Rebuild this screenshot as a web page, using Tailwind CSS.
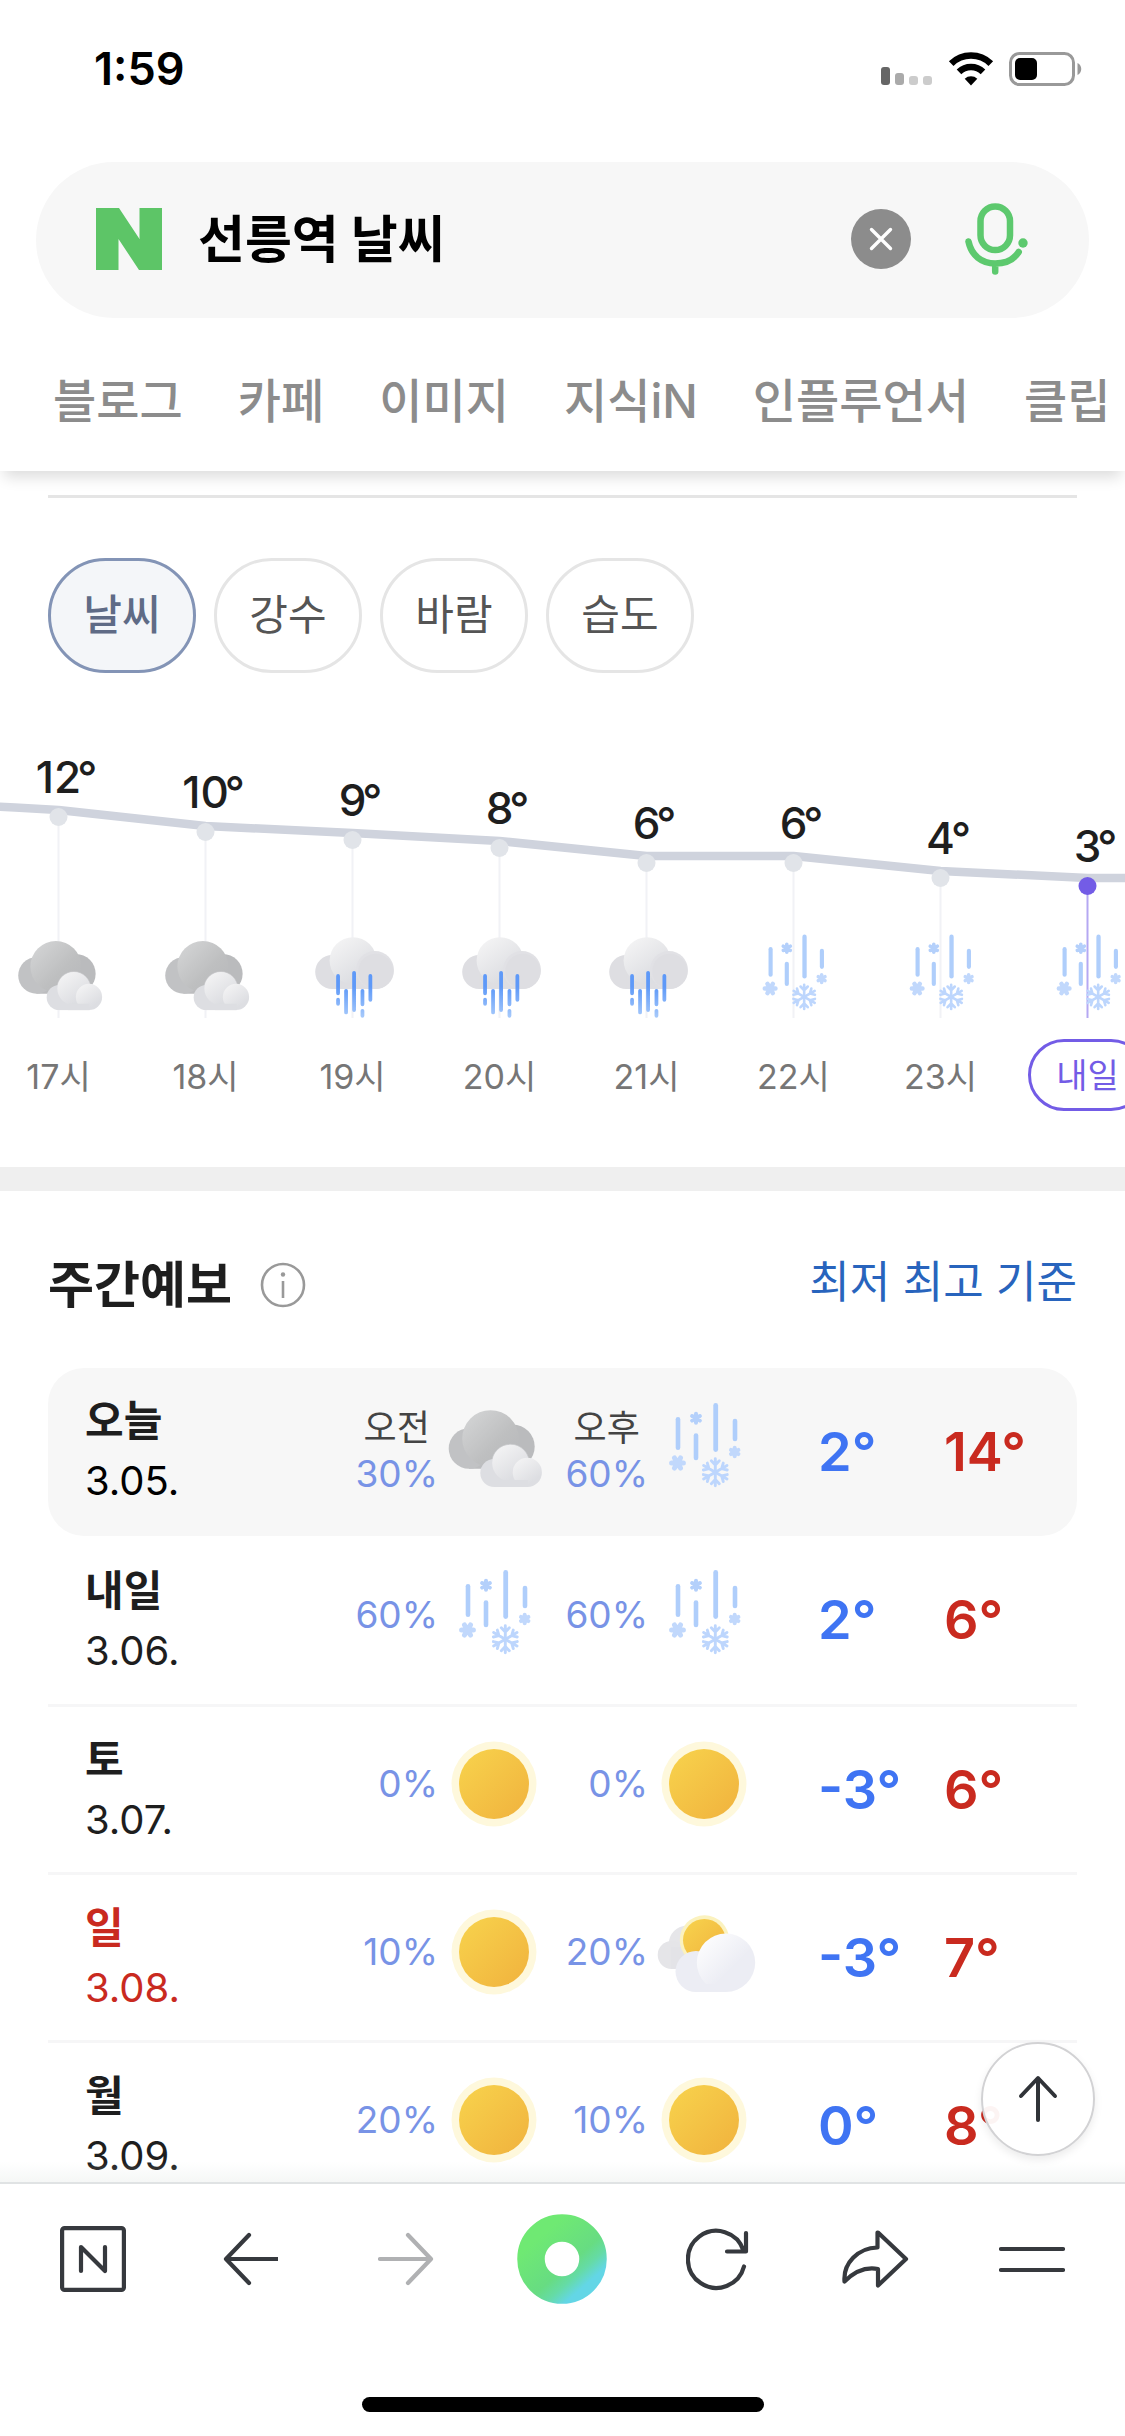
<!DOCTYPE html>
<html lang="ko">
<head>
    <meta charset="UTF-8">
    <meta name="viewport" content="width=device-width, initial-scale=1.0">
    <title>선릉역 날씨</title>
    <script src="https://cdn.jsdelivr.net/npm/@tailwindcss/browser@4"></script>
</head>
<body class="flex flex-col h-screen overflow-hidden bg-white text-[#1e1e1e] font-['Inter','Noto_Sans_CJK_KR',sans-serif]">

    <!-- weather icons -->
    <svg class="absolute size-0" aria-hidden="true">
        <defs>
            <linearGradient id="darkCloud" x1="0.1" y1="0.1" x2="0.8" y2="0.8">
                <stop offset="0" stop-color="#d2d3d4"/><stop offset="0.7" stop-color="#bebfc0"/><stop offset="1" stop-color="#babbbd"/>
            </linearGradient>
            <linearGradient id="lightCloud" x1="0.2" y1="0.1" x2="0.7" y2="0.8">
                <stop offset="0" stop-color="#f2f2f3"/><stop offset="1" stop-color="#dddee2"/>
            </linearGradient>
            <linearGradient id="whiteCloud" x1="0.1" y1="0.1" x2="0.6" y2="0.6">
                <stop offset="0" stop-color="#fdfdfe"/><stop offset="1" stop-color="#ecedf4"/>
            </linearGradient>
            <linearGradient id="sunFill" x1="0.1" y1="0.1" x2="0.9" y2="0.9">
                <stop offset="0" stop-color="#f7d04b"/><stop offset="1" stop-color="#f1b53f"/>
            </linearGradient>
            <linearGradient id="rainFill" gradientUnits="userSpaceOnUse" x1="0" y1="48" x2="0" y2="98">
                <stop offset="0.3" stop-color="#5e99f8"/><stop offset="1" stop-color="#a9cbfb"/>
            </linearGradient>
        </defs>

        <symbol id="cloudy" viewBox="0 0 100 100">
            <path d="M25 50h44v20.700H25z" fill="#bcbdbf"/>
            <circle cx="25" cy="50.500" r="20.300" fill="#c1c2c4"/>
            <circle cx="68.700" cy="48.600" r="22" fill="#babbbd"/>
            <circle cx="46.500" cy="40.500" r="28.300" fill="url(#darkCloud)"/>
            <circle cx="66.500" cy="65" r="18.700" fill="#dddee2" stroke="#c9cacc"/>
            <circle cx="50.300" cy="75" r="14" fill="#dddee2"/>
            <path d="M50 72h34v17H50z" fill="#dddee2"/>
            <circle cx="66.500" cy="65" r="18.300" fill="url(#lightCloud)"/>
            <circle cx="83.300" cy="74.400" r="14.600" fill="url(#lightCloud)"/>
            <path d="M60 82h24v7H60z" fill="#dddee2"/>
        </symbol>

        <symbol id="rainy" viewBox="0 0 100 100">
            <circle cx="26.900" cy="46.700" r="18.900" fill="#dedee2"/>
            <path d="M27 44h47v21.600H27z" fill="#dedee2"/>
            <circle cx="50" cy="34" r="26" fill="url(#lightCloud)"/>
            <circle cx="74.400" cy="44.500" r="21.100" fill="#e1e1e5"/>
            <circle cx="75.400" cy="46" r="19.600" fill="#dedee2"/>
            <path d="M33.400 51v19.300M33.400 77.500v4.500M42.300 67.600v24M51.200 47.600v41.400M60.500 67.600v15M60.500 89.800v5.600M69.300 51v26.600" fill="none" stroke="url(#rainFill)" stroke-width="4.200" stroke-linecap="round"/>
        </symbol>

        <symbol id="snowy" viewBox="0 0 100 100">
            <g fill="#afcefb">
                <rect x="21.700" y="19" width="4.600" height="33" rx="2.300"/>
                <rect x="39.700" y="35.300" width="4.600" height="27" rx="2.300"/>
                <rect x="59.300" y="5" width="4.800" height="49" rx="2.400"/>
                <rect x="78.700" y="20.700" width="4.600" height="22.500" rx="2.300"/>
            </g>
            <g stroke="#b4d0fb" stroke-width="4" stroke-linecap="round">
                <path d="M42 15.800v9M38.100 18l7.800 4.600M38.100 22.600l7.800-4.600"/>
                <path stroke="#c1d8fc" d="M80.700 49.800v8.400M77 51.900l7.400 4.200M77 56.100l7.400-4.200"/>
                <path stroke="#c1d8fc" stroke-width="5" d="M17.600 65h11.800M20.500 59.900l6 10.200M26.500 59.900l-6 10.200"/>
            </g>
            <g fill="none" stroke="#bdd6fd" stroke-width="2.900" stroke-linecap="round" stroke-linejoin="round">
                <path id="arm" d="M61.300 74.300V60.800M57.300 62.800l4 4.200 4-4.200"/>
                <use href="#arm" transform="rotate(60 61.300 74.300)"/>
                <use href="#arm" transform="rotate(120 61.300 74.300)"/>
                <use href="#arm" transform="rotate(180 61.300 74.300)"/>
                <use href="#arm" transform="rotate(240 61.300 74.300)"/>
                <use href="#arm" transform="rotate(300 61.300 74.300)"/>
            </g>
        </symbol>

        <symbol id="sunny" viewBox="0 0 100 100">
            <circle cx="50" cy="50" r="42.500" fill="#fef8dc"/>
            <circle cx="50" cy="50" r="35" fill="url(#sunFill)"/>
        </symbol>

        <symbol id="partly" viewBox="0 0 100 100" overflow="visible">
            <circle cx="33" cy="42" r="18.300" fill="#e6e6e9"/>
            <circle cx="17.700" cy="53" r="14" fill="#e5e5e8"/>
            <path d="M17 45h22v22H17z" fill="#e3e3e7"/>
            <circle cx="50.500" cy="38" r="24.700" fill="#fbf2bf"/>
            <circle cx="50.300" cy="38.200" r="21.300" fill="url(#sunFill)"/>
            <circle cx="42" cy="69.500" r="20.500" fill="#ecedf4"/>
            <circle cx="72" cy="60.700" r="29.200" fill="url(#whiteCloud)"/>
            <path d="M42 82h30v8H42z" fill="#ecedf4"/>
        </symbol>
    </svg>

    <header class="relative z-10 shrink-0 bg-white shadow-[0_10px_14px_-4px_rgba(0,0,0,0.14)]">
        <!-- status bar -->
        <div class="flex items-center justify-between h-[138px] pl-[94px] pr-[42px]">
            <span class="text-[45px] leading-[44px] font-semibold text-black">1:59</span>
            <div class="flex items-end gap-[15px]">
                <svg class="w-[52px] h-[20px]" viewBox="0 0 52 20">
                    <rect x="0" y="1" width="9" height="18" rx="3" fill="#666"/>
                    <rect x="14" y="7" width="9" height="12" rx="3" fill="#aaa"/>
                    <rect x="28" y="10" width="9" height="9" rx="3" fill="#ccc"/>
                    <rect x="42" y="10" width="9" height="9" rx="3" fill="#ccc"/>
                </svg>
                <svg class="w-[46px] h-[34px]" viewBox="0 0 46 34">
                    <path d="M23 33.400l-6.300-6.600a9.200 9.200 0 0 1 12.600 0z" fill="#000"/>
                    <path d="M11 20.800a17.300 17.300 0 0 1 24 0M3.200 12.600a28.400 28.400 0 0 1 39.600 0" transform="translate(0 -1)" fill="none" stroke="#000" stroke-width="6.600"/>
                </svg>
                <svg class="w-[74px] h-[34px]" viewBox="0 0 74 34">
                    <rect x="1.500" y="1.500" width="63" height="31" rx="9" fill="none" stroke="#999" stroke-width="3"/>
                    <rect x="6" y="6" width="22" height="22" rx="5" fill="#000"/>
                    <path d="M68.500 11c5 2 5 10 0 12z" fill="#999"/>
                </svg>
            </div>
        </div>

        <form class="flex items-center h-[156px] mx-9 mt-6 pl-[60px] pr-[60px] pb-0.5 rounded-full bg-[#f7f7f7]">
            <svg class="w-[66px] h-[62px] shrink-0" viewBox="0 0 66 62" role="img" aria-label="NAVER">
                <path d="M0 0h23l20.500 31V0H66v62H43L22.500 31v31H0z" fill="#5dc567"/>
            </svg>
            <input type="search" aria-label="검색어" value="선릉역 날씨" class="flex-1 min-w-0 ml-9 pt-0.5 bg-transparent text-[51px] leading-[72px] font-bold text-black outline-none appearance-none">
            <button type="button" aria-label="지우기" class="size-[60px] shrink-0">
                <svg viewBox="0 0 60 60">
                    <circle cx="30" cy="30" r="30" fill="#8c8c8c"/>
                    <path d="M20.500 20.500l19 19M39.500 20.500l-19 19" stroke="#fff" stroke-width="3.400" stroke-linecap="round"/>
                </svg>
            </button>
            <button type="button" aria-label="음성 검색" class="ml-[54px] w-[64px] h-[72px] shrink-0">
                <svg viewBox="0 0 64 72" fill="none" stroke="#5dc96e" stroke-width="6.500" stroke-linecap="round">
                    <rect x="15.500" y="3.500" width="29.500" height="43.500" rx="14.700"/>
                    <path d="M3.500 38.500c3 14 13 22 26.700 22 10.500 0 19-4.500 23.500-11.500M30.200 61v7.500"/>
                    <circle cx="58" cy="40" r="4.700" fill="#5dc96e" stroke="none"/>
                </svg>
            </button>
        </form>

        <nav class="flex items-center gap-[55px] h-[153px] pl-[53px] pt-3 overflow-hidden whitespace-nowrap text-[47px] leading-[70px] font-medium text-[#8c8c8c]">
            <a href="#">블로그</a>
            <a href="#">카페</a>
            <a href="#">이미지</a>
            <a href="#">지식iN</a>
            <a href="#">인플루언서</a>
            <a href="#">클립</a>
        </nav>
    </header>

    <main class="relative flex-1 min-h-0 overflow-hidden">
        <section>
            <hr class="mx-12 mt-6 border-0 border-t-3 border-[#e5e5e5]">
            <div class="flex gap-[18px] mx-12 mt-[60px] text-[42px] leading-[60px] text-[#555]">
                <button class="w-[148px] h-[115px] pb-0.5 rounded-full border-3 border-[#8394b6] bg-[#f4f6f9] font-medium text-[#5f6b86]">날씨</button>
                <button class="w-[148px] h-[115px] pb-0.5 rounded-full border-3 border-[#e5e5e5]">강수</button>
                <button class="w-[148px] h-[115px] pb-0.5 rounded-full border-3 border-[#e5e5e5]">바람</button>
                <button class="w-[148px] h-[115px] pb-0.5 rounded-full border-3 border-[#e5e5e5]">습도</button>
            </div>

            <!-- hourly chart -->
            <div class="relative overflow-hidden">
                <svg class="absolute top-0 -left-[15px] w-[1176px] h-[350px]" viewBox="0 0 1176 350">
                    <path d="M73.500 144v201M220.500 160v185M367.500 167v178M514.500 175v170M661.500 190v155M808.500 190v155M955.500 205v140" stroke="#f1f2f6" stroke-width="2"/>
                    <path d="M1102.500 213v132" stroke="#b5a8f2" stroke-width="2"/>
                    <path d="M0 133L30 134.500L73.500 137L220.500 153L367.500 160L514.500 168L661.500 183H808.500L955.500 198L1102.500 205H1176" fill="none" stroke="#cfd3dd" stroke-width="8.500" stroke-linejoin="round"/>
                    <g fill="#e1e4e9">
                        <circle cx="73.500" cy="144" r="9"/>
                        <circle cx="220.500" cy="159" r="9"/>
                        <circle cx="367.500" cy="167" r="9"/>
                        <circle cx="514.500" cy="175" r="9"/>
                        <circle cx="661.500" cy="190" r="9"/>
                        <circle cx="808.500" cy="190" r="9"/>
                        <circle cx="955.500" cy="205" r="9"/>
                    </g>
                    <circle cx="1102.500" cy="213" r="9" fill="#735ce6"/>
                </svg>
                <ul class="relative flex -ml-[15px] pb-14 text-[34px] text-[#767676]">
                    <li class="flex flex-col items-center w-[147px] shrink-0">
                        <div class="h-[257px] text-[44px] leading-[44px] font-medium text-[#1e1e1e]" style="padding-top: 82px">12<span class="inline-block w-0 -ml-1">°</span></div>
                        <svg class="size-[90px]"><use href="#cloudy"/></svg>
                        <span class="flex items-center h-[72px] mt-[19px] pt-0.5">17시</span>
                    </li>
                    <li class="flex flex-col items-center w-[147px] shrink-0">
                        <div class="h-[257px] text-[44px] leading-[44px] font-medium text-[#1e1e1e]" style="padding-top: 97px">10<span class="inline-block w-0 -ml-1">°</span></div>
                        <svg class="size-[90px]"><use href="#cloudy"/></svg>
                        <span class="flex items-center h-[72px] mt-[19px] pt-0.5">18시</span>
                    </li>
                    <li class="flex flex-col items-center w-[147px] shrink-0">
                        <div class="h-[257px] text-[44px] leading-[44px] font-medium text-[#1e1e1e]" style="padding-top: 105px">9<span class="inline-block w-0 -ml-1">°</span></div>
                        <svg class="size-[90px]"><use href="#rainy"/></svg>
                        <span class="flex items-center h-[72px] mt-[19px] pt-0.5">19시</span>
                    </li>
                    <li class="flex flex-col items-center w-[147px] shrink-0">
                        <div class="h-[257px] text-[44px] leading-[44px] font-medium text-[#1e1e1e]" style="padding-top: 113px">8<span class="inline-block w-0 -ml-1">°</span></div>
                        <svg class="size-[90px]"><use href="#rainy"/></svg>
                        <span class="flex items-center h-[72px] mt-[19px] pt-0.5">20시</span>
                    </li>
                    <li class="flex flex-col items-center w-[147px] shrink-0">
                        <div class="h-[257px] text-[44px] leading-[44px] font-medium text-[#1e1e1e]" style="padding-top: 128px">6<span class="inline-block w-0 -ml-1">°</span></div>
                        <svg class="size-[90px]"><use href="#rainy"/></svg>
                        <span class="flex items-center h-[72px] mt-[19px] pt-0.5">21시</span>
                    </li>
                    <li class="flex flex-col items-center w-[147px] shrink-0">
                        <div class="h-[257px] text-[44px] leading-[44px] font-medium text-[#1e1e1e]" style="padding-top: 128px">6<span class="inline-block w-0 -ml-1">°</span></div>
                        <svg class="size-[90px]"><use href="#snowy"/></svg>
                        <span class="flex items-center h-[72px] mt-[19px] pt-0.5">22시</span>
                    </li>
                    <li class="flex flex-col items-center w-[147px] shrink-0">
                        <div class="h-[257px] text-[44px] leading-[44px] font-medium text-[#1e1e1e]" style="padding-top: 143px">4<span class="inline-block w-0 -ml-1">°</span></div>
                        <svg class="size-[90px]"><use href="#snowy"/></svg>
                        <span class="flex items-center h-[72px] mt-[19px] pt-0.5">23시</span>
                    </li>
                    <li class="flex flex-col items-center w-[147px] shrink-0">
                        <div class="h-[257px] text-[44px] leading-[44px] font-medium text-[#1e1e1e]" style="padding-top: 151px">3<span class="inline-block w-0 -ml-1">°</span></div>
                        <svg class="size-[90px]"><use href="#snowy"/></svg>
                        <span class="flex items-center h-[72px] mt-[19px] px-[25px] rounded-full border-3 border-[#735ce6] bg-white text-[#735ce6]">내일</span>
                    </li>
                </ul>
            </div>
        </section>

        <section class="border-t-24 border-[#efefef] px-12">
            <div class="flex items-center justify-between h-[177px] pt-2.5">
                <div class="flex items-center gap-[28px]">
                    <h2 class="text-[50px] leading-[72px] font-bold">주간예보</h2>
                    <button aria-label="주간예보 안내" class="size-[46px]">
                        <svg viewBox="0 0 46 46" fill="none" stroke="#999" stroke-width="2.600">
                            <circle cx="23" cy="23" r="21"/>
                            <path d="M23 19v17"/>
                            <circle cx="23" cy="12.500" r="2.200" fill="#999" stroke="none"/>
                        </svg>
                    </button>
                </div>
                <a href="#" class="pb-1.5 text-[44px] leading-[60px] text-[#2864bd]">최저 최고 기준</a>
            </div>

            <table class="w-full table-fixed border-separate border-spacing-0 text-left">
                <caption class="sr-only">주간예보</caption>
                <colgroup>
                    <col>
                    <col class="w-[210px]">
                    <col class="w-[210px]">
                    <col class="w-[190px]">
                    <col class="w-[133px]">
                </colgroup>
                <tbody>
                    <tr class="h-[168px] *:bg-[#f7f7f7]">
                        <th scope="row" class="pl-[37px] pb-1 rounded-l-[36px] text-[42px] leading-[59px] font-bold">오늘<br><span class="text-[40px] font-normal text-black">3.05.</span></th>
                        <td class="pb-2">
                            <div class="flex items-center justify-end gap-1.5">
                                <div class="flex flex-col items-center pt-1.5 text-[36px] leading-[46px] text-[#444]">오전<span class="text-[37px] text-[#7893e6]">30%</span></div>
                                <svg class="size-[100px]"><use href="#cloudy"/></svg>
                            </div>
                        </td>
                        <td class="pb-2">
                            <div class="flex items-center justify-end gap-1.5">
                                <div class="flex flex-col items-center pt-1.5 text-[36px] leading-[46px] text-[#444]">오후<span class="text-[37px] text-[#7893e6]">60%</span></div>
                                <svg class="size-[100px]"><use href="#snowy"/></svg>
                            </div>
                        </td>
                        <td class="pl-[64px] text-[54px] leading-[64px] font-semibold text-[#3f74f3]">2°</td>
                        <td class="rounded-r-[36px] text-[54px] leading-[64px] font-semibold text-[#c92a1f]">14°</td>
                    </tr>
                    <tr class="h-[168px]">
                        <th scope="row" class="pl-[37px] text-[42px] leading-[59px] font-bold">내일<br><span class="text-[40px] font-normal">3.06.</span></th>
                        <td class="pb-2.5">
                            <div class="flex items-center justify-end gap-1.5 text-[37px] text-[#7893e6]">60%<svg class="size-[100px]"><use href="#snowy"/></svg></div>
                        </td>
                        <td class="pb-2.5">
                            <div class="flex items-center justify-end gap-1.5 text-[37px] text-[#7893e6]">60%<svg class="size-[100px]"><use href="#snowy"/></svg></div>
                        </td>
                        <td class="pl-[64px] text-[54px] leading-[64px] font-semibold text-[#3f74f3]">2°</td>
                        <td class="text-[54px] leading-[64px] font-semibold text-[#c92a1f]">6°</td>
                    </tr>
                    <tr class="h-[168px] *:border-t-3 *:border-[#f6f6f7]">
                        <th scope="row" class="pl-[37px] text-[42px] leading-[59px] font-bold">토<br><span class="text-[40px] font-normal">3.07.</span></th>
                        <td class="pb-3">
                            <div class="flex items-center justify-end gap-1.5 text-[37px] text-[#7893e6]">0%<svg class="size-[100px]"><use href="#sunny"/></svg></div>
                        </td>
                        <td class="pb-3">
                            <div class="flex items-center justify-end gap-1.5 text-[37px] text-[#7893e6]">0%<svg class="size-[100px]"><use href="#sunny"/></svg></div>
                        </td>
                        <td class="pl-[64px] text-[54px] leading-[64px] font-semibold text-[#3f74f3]">-3°</td>
                        <td class="text-[54px] leading-[64px] font-semibold text-[#c92a1f]">6°</td>
                    </tr>
                    <tr class="h-[168px] *:border-t-3 *:border-[#f6f6f7]">
                        <th scope="row" class="pl-[37px] text-[42px] leading-[59px] font-bold text-[#c92a1f]">일<br><span class="text-[40px] font-normal">3.08.</span></th>
                        <td class="pb-3">
                            <div class="flex items-center justify-end gap-1.5 text-[37px] text-[#7893e6]">10%<svg class="size-[100px]"><use href="#sunny"/></svg></div>
                        </td>
                        <td class="pb-3">
                            <div class="flex items-center justify-end gap-1.5 text-[37px] text-[#7893e6]">20%<svg class="size-[100px] overflow-visible"><use href="#partly"/></svg></div>
                        </td>
                        <td class="pl-[64px] text-[54px] leading-[64px] font-semibold text-[#3f74f3]">-3°</td>
                        <td class="text-[54px] leading-[64px] font-semibold text-[#c92a1f]">7°</td>
                    </tr>
                    <tr class="h-[168px] *:border-t-3 *:border-[#f6f6f7]">
                        <th scope="row" class="pl-[37px] text-[42px] leading-[59px] font-bold">월<br><span class="text-[40px] font-normal">3.09.</span></th>
                        <td class="pb-3">
                            <div class="flex items-center justify-end gap-1.5 text-[37px] text-[#7893e6]">20%<svg class="size-[100px]"><use href="#sunny"/></svg></div>
                        </td>
                        <td class="pb-3">
                            <div class="flex items-center justify-end gap-1.5 text-[37px] text-[#7893e6]">10%<svg class="size-[100px]"><use href="#sunny"/></svg></div>
                        </td>
                        <td class="pl-[64px] text-[54px] leading-[64px] font-semibold text-[#3f74f3]">0°</td>
                        <td class="text-[54px] leading-[64px] font-semibold text-[#c92a1f]">8°</td>
                    </tr>
                </tbody>
            </table>
        </section>

        <div class="absolute inset-x-0 bottom-0 h-5 bg-linear-to-b from-transparent to-[#dfe5e2]/30"></div>
        <button aria-label="맨 위로" class="absolute right-[30px] bottom-[26px] size-[114px] flex items-center justify-center rounded-full border-2 border-[#d2d2d4] bg-white/95 shadow-[0_4px_8px_rgba(0,0,0,0.08)]">
            <svg class="w-[40px] h-[48px]" viewBox="0 0 40 48" fill="none" stroke="#303338" stroke-width="4" stroke-linecap="round" stroke-linejoin="round">
                <path d="M20 45V4M3 21L20 3l17 18"/>
            </svg>
        </button>
    </main>

    <!-- browser toolbar -->
    <footer class="shrink-0 border-t-2 border-[#e0e3e4] bg-white">
        <nav class="grid grid-cols-7 items-center justify-items-center h-[150px] px-[15px] text-[#36393e]">
            <button aria-label="홈">
                <svg class="size-[66px]" viewBox="0 0 66 66" fill="none" stroke="currentColor" stroke-width="4.200" stroke-linecap="round" stroke-linejoin="round">
                    <rect x="2.100" y="2.100" width="61.800" height="61.800" rx="2.500"/>
                    <path d="M21 45V21l24 24V21"/>
                </svg>
            </button>
            <button aria-label="뒤로">
                <svg class="size-[56px]" viewBox="0 0 56 56" fill="none" stroke="currentColor" stroke-width="4.200" stroke-linecap="round" stroke-linejoin="round">
                    <path d="M55 28H5M27 4L4 28l23 24"/>
                </svg>
            </button>
            <button aria-label="앞으로" class="text-[#b0b1b3]">
                <svg class="size-[56px]" viewBox="0 0 56 56" fill="none" stroke="currentColor" stroke-width="4.200" stroke-linecap="round" stroke-linejoin="round">
                    <path d="M2 28h50M30 4l23 24-23 24"/>
                </svg>
            </button>
            <button aria-label="그린닷">
                <svg class="size-[90px]" viewBox="0 0 90 90">
                    <defs>
                        <linearGradient id="dot" x1="0.2" y1="0.1" x2="0.9" y2="0.9">
                            <stop offset="0" stop-color="#6fe973"/><stop offset="0.6" stop-color="#67dc82"/><stop offset="0.8" stop-color="#65dba6"/><stop offset="1" stop-color="#63d6e6"/>
                        </linearGradient>
                    </defs>
                    <circle cx="45" cy="45" r="31" fill="none" stroke="url(#dot)" stroke-width="27.500"/>
                </svg>
            </button>
            <button aria-label="새로고침">
                <svg class="size-[66px]" viewBox="0 0 66 66" fill="none" stroke="currentColor" stroke-width="4.200" stroke-linecap="round" stroke-linejoin="round">
                    <path d="M58 40.500A28.500 28.500 0 1 1 57.500 24.500M60 7v18.500H41"/>
                </svg>
            </button>
            <button aria-label="공유">
                <svg class="w-[68px] h-[60px]" viewBox="0 0 68 60" fill="none" stroke="currentColor" stroke-width="4.200" stroke-linecap="round" stroke-linejoin="round">
                    <path d="M37 3.500L65 30 37 56.500V40C24 37.500 14 42 3.500 52.500 2 34 17 19 36.500 18.500V3.500z"/>
                </svg>
            </button>
            <button aria-label="메뉴">
                <svg class="size-[66px]" viewBox="0 0 66 66" fill="none" stroke="currentColor" stroke-width="4.200" stroke-linecap="round">
                    <path d="M2 23h62M2 44h62"/>
                </svg>
            </button>
        </nav>
        <div class="w-[402px] h-[15px] mx-auto mt-[63px] mb-6 rounded-full bg-black"></div>
    </footer>
</body>
</html>
